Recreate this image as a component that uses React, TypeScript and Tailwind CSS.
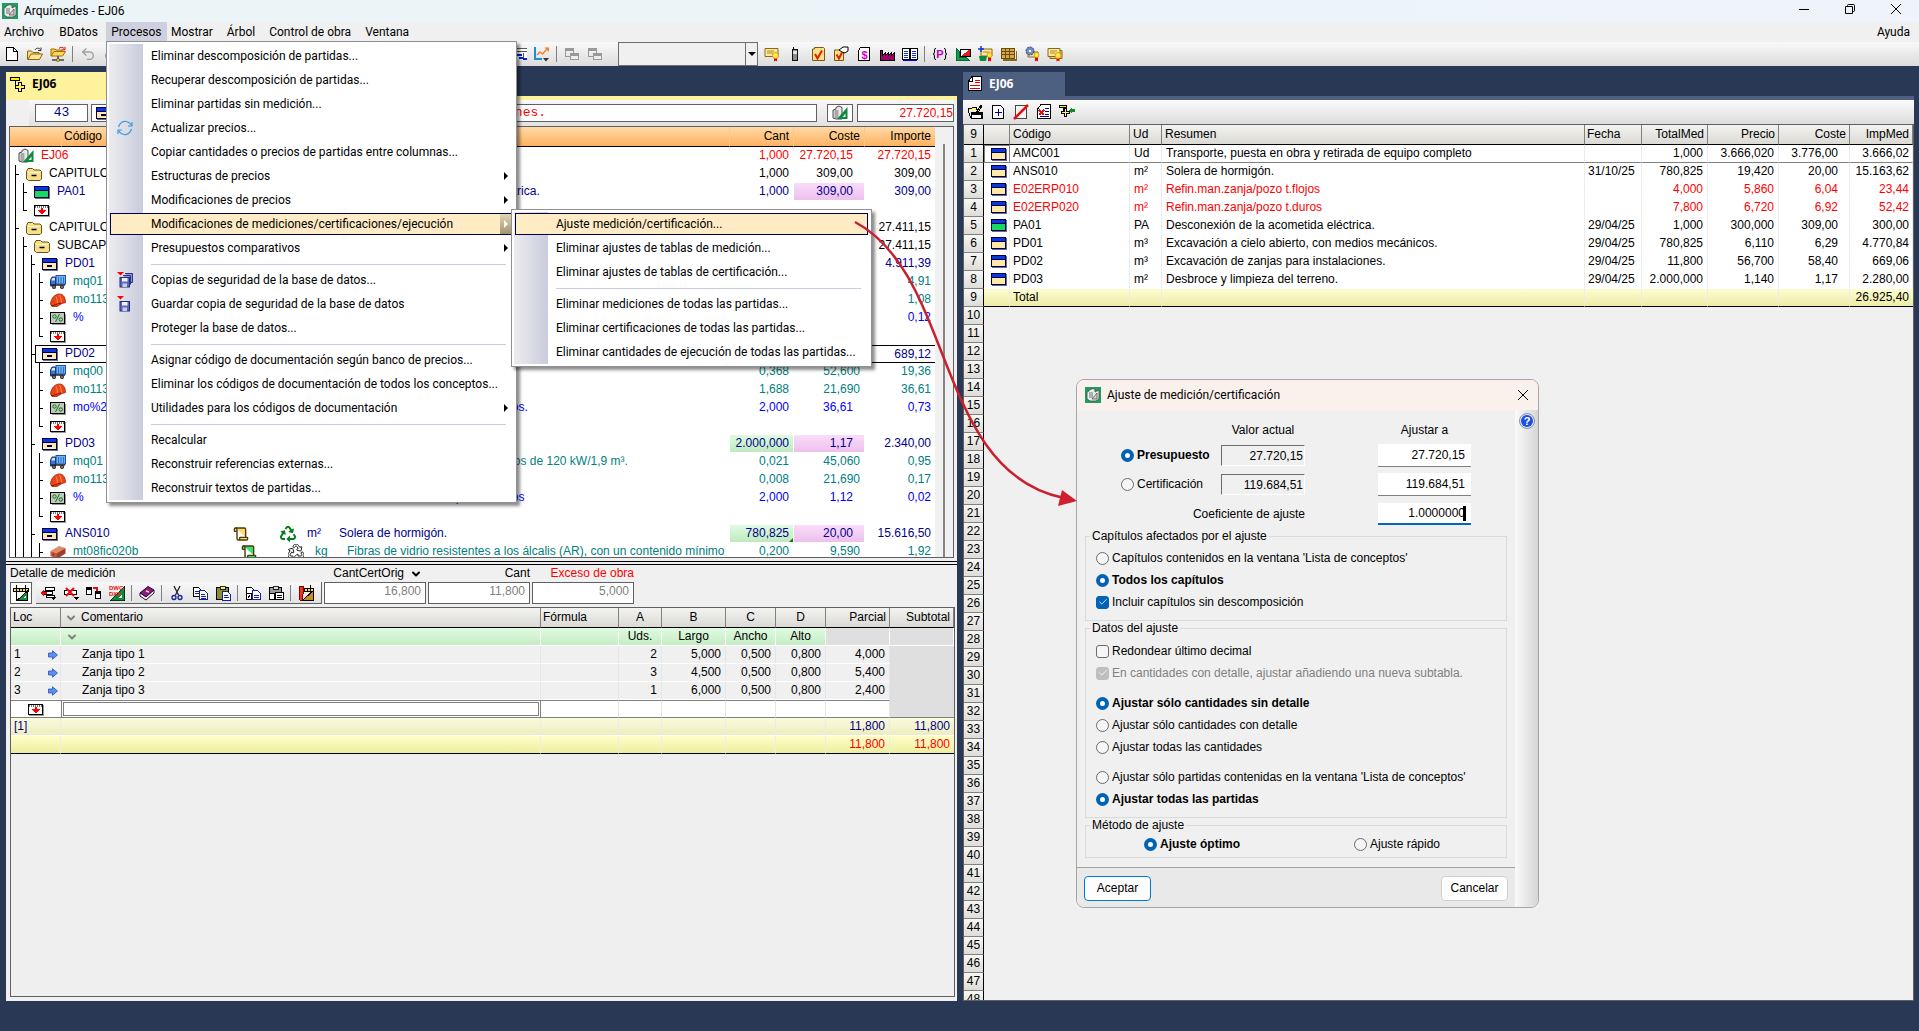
import type { ReactNode } from "react";
import { Check, ChevronDown, Scroll, Undo2, Redo2 } from "lucide-react";
import { FaRecycle } from "react-icons/fa";

/* ---------- Icons ---------- */

function Ico({ children, crisp = true }: { children: ReactNode; crisp?: boolean }) {
  return (
    <svg
      className="size-4 shrink-0"
      viewBox="0 0 16 16"
      fill="none"
      shapeRendering={crisp ? "crispEdges" : "auto"}
      aria-hidden="true"
    >
      {children}
    </svg>
  );
}

const AppIcon = () => (
  <Ico crisp={false}>
    <rect width="16" height="16" fill="#1f9d63" />
    <path d="M2 5l2-1V3l4-1.500l2 1V5l4-2v9l-3 2H5l-3-2z" fill="#e8ece9" stroke="#4a4f4c" strokeWidth=".8" />
    <path d="M4 6h4M4 8h4M4 10h4" stroke="#555" strokeWidth=".8" />
    <path d="M7 12l5-6v6z" fill="#cfd6d2" stroke="#444" strokeWidth=".7" />
  </Ico>
);

const ProjectIcon = () => (
  <Ico crisp={false}>
    <path d="M1 5l3-1V2.500L7 1l3 1.500V14H4l-3-1z" fill="#e9ebea" stroke="#333" strokeWidth=".9" />
    <path d="M2.500 6h4M2.500 8h4M2.500 10h4M2.500 12h4" stroke="#555" strokeWidth=".9" />
    <path d="M5 14L15.500 2v12z" fill="#0f8a3c" />
    <path d="M10.500 12l3-3.500V12z" fill="#e9f5ec" />
  </Ico>
);

const FolderIcon = () => (
  <Ico crisp={false}>
    <path d="M.5 5.500L2 2.500h4.500L8 4h6L15.500 5.500v7.500L14 14.500H2.500L.5 13z" fill="#f5df8d" stroke="#6b5312" />
    <path d="M2 6.500h12" stroke="#fff6c8" />
    <path d="M5.500 9.500h5" stroke="#000" strokeWidth="1.500" />
  </Ico>
);

function ItemIcon({ fill = "#ffe9a8", minus = false }: { fill?: string; minus?: boolean }) {
  return (
    <Ico>
      <path d="M1 14.500h14.500V3" stroke="#6a6a8a" />
      <rect x=".5" y="2.500" width="14" height="11" fill={fill} stroke="#00004a" />
      <rect x="1" y="3" width="13" height="3" fill="#0a38e0" />
      <path d="M1 6.500h13" stroke="#00004a" />
      {minus && <path d="M5 10h5" stroke="#00004a" strokeWidth="2" />}
    </Ico>
  );
}

const EndIcon = () => (
  <Ico>
    <path d="M1 14.500h14.500V4" stroke="#999" />
    <rect x=".5" y="3.500" width="14" height="10" fill="#fff" stroke="#000" />
    <path d="M1 5h13" stroke="#777" strokeWidth="2" strokeDasharray="1 1" />
    <path d="M7 6h2v2h3v1h-1v1h-1v1H9v1H7v-1H6v-1H5V9H4V8h3z" fill="#f00" />
  </Ico>
);

const TruckIcon = () => (
  <Ico crisp={false}>
    <rect x="6" y="1.500" width="9.500" height="8.500" fill="#6fb4f5" stroke="#1c4f9c" />
    <path d="M8.500 3v6M11 3v6M13.500 3v6" stroke="#2f6fc4" />
    <path d="M.5 6L2 3h3.500v9h-5z" fill="#2f78d8" stroke="#143d80" />
    <path d="M1.500 6L2.500 4H5v2.500H1.500z" fill="#e9e4d8" />
    <path d="M1 11h14" stroke="#223" strokeWidth="1.500" />
    <circle cx="4" cy="13" r="2" fill="#222" />
    <circle cx="12" cy="13" r="2" fill="#222" />
    <circle cx="4" cy="13" r=".8" fill="#ccc" />
    <circle cx="12" cy="13" r=".8" fill="#ccc" />
  </Ico>
);

const HelmetIcon = () => (
  <Ico crisp={false}>
    <path d="M.5 12C1 6 5 2 9.500 2c4 0 6 4 6 8.500l-3.500 1-5 3H2z" fill="#ec4417" stroke="#9c2305" strokeWidth=".8" />
    <path d="M6 4.500c1 2 1.500 4 1.300 7M9.500 3c1.200 2 1.800 4.500 1.800 7.500" stroke="#ff9a6b" strokeWidth=".9" />
    <path d="M1 13.500c3 .5 6-2 10-2.500" stroke="#7a1a02" />
  </Ico>
);

const PercentIcon = () => (
  <Ico>
    <path d="M15.500 4v10.500H2" stroke="#999" />
    <rect x=".5" y="2.500" width="14" height="11" fill="#c3c6c3" stroke="#000" />
    <g shapeRendering="auto" stroke="#067a06">
      <circle cx="4.500" cy="6.500" r="1.700" />
      <circle cx="10.800" cy="9.500" r="1.700" />
      <path d="M9.500 4l-4 8" />
    </g>
  </Ico>
);

const BrickIcon = () => (
  <Ico crisp={false}>
    <path d="M.5 7L9 2l6.500 2L7 9z" fill="#e08a6a" />
    <path d="M.5 7L7 9v6L.5 12z" fill="#c4553a" />
    <path d="M7 9l8.500-5v5.500L7 15z" fill="#a13d27" />
    <circle cx="3.500" cy="10.500" r=".8" fill="#6b2314" />
  </Ico>
);

const ArrowRightIcon = () => (
  <svg className="h-2.5 w-2.5 shrink-0" viewBox="0 0 10 10" aria-hidden="true">
    <path d="M.5 3h4V.8L9.500 5 4.500 9.200V7h-4z" fill="#5b8ff0" stroke="#2a50b0" strokeWidth=".8" />
  </svg>
);

const RefreshIcon = () => (
  <Ico crisp={false}>
    <path d="M1.500 7C2.500 3 6 1 9 1.500c2.500.3 4.300 1.800 5.500 4M14.500 9c-1 4-4.500 6-7.500 5.500C4.500 14.200 2.700 12.700 1.500 10.500" stroke="#3d9be0" strokeWidth="1.200" />
    <path d="M15 2v4h-4M1 14v-4h4" stroke="#3d9be0" strokeWidth="1.200" />
  </Ico>
);

function FloppyIcon({ stack = false }: { stack?: boolean }) {
  return (
    <Ico crisp={false}>
      {stack && <path d="M8 1.500h7.500v9h-2M6 3.500h7.500v9" fill="#8d97d8" stroke="#2d3684" />}
      <rect x="3" y="5.500" width="9.500" height="9.500" fill="#5a67c0" stroke="#242c74" />
      <rect x="5" y="6" width="5.500" height="3.500" fill="#eef0fb" />
      <rect x="5.500" y="11.500" width="4.500" height="3.500" fill="#c8cdea" />
      <path d="M0 0h7L3.500 3.500z" fill="#f00" />
    </Ico>
  );
}

const TreeTabIcon = () => (
  <Ico>
    <path d="M.5 1.500h9v3h-9z" fill="#fff000" stroke="#000" />
    <path d="M5 4.500v5" stroke="#000" />
    <path d="M8.500 6.500h3v3h3v3h-3v3h-3v-3h-3v-3h3z" fill="#fff36b" stroke="#000" />
  </Ico>
);

const ListTabIcon = () => (
  <Ico>
    <path d="M5 .5h9.500v14H1.500V5z" fill="#fff" stroke="#000" />
    <path d="M5.500 1v4H2" stroke="#000" />
    <path d="M8 4.500h5M8 6.500h5M3 9.500h10M3 12.500h10" stroke="#e00000" />
  </Ico>
);

const NewIcon = () => (
  <Ico>
    <path d="M2.500 1.500h7l4 4v9h-11z" fill="#fff" stroke="#000" />
    <path d="M9.500 1.500v4h4" stroke="#000" />
  </Ico>
);

const OpenIcon = () => (
  <Ico crisp={false}>
    <path d="M.5 13.500V5h4l1.500 1.500h6V8" fill="#f7dc7a" stroke="#8a6410" />
    <path d="M1 13.500L4 8h11.500l-3 5.500z" fill="#fbe796" stroke="#8a6410" />
    <path d="M8 4c1-2 4-2.500 5.500-.5M14 1.500V4.500h-3" stroke="#333" />
  </Ico>
);

const NetFolderIcon = () => (
  <Ico crisp={false}>
    <path d="M1 10V3h4l1 1h6v1.500" fill="#f7c94c" stroke="#a86a00" />
    <path d="M1 10l3-4.500h11.500l-3 4.500z" fill="#ffd95e" stroke="#a86a00" />
    <path d="M9 2.500c1-1.500 4-1.500 5 0M15 .8v3h-3" stroke="#e00000" />
    <path d="M8 10v3M2 14h12" stroke="#444" strokeWidth="1.500" />
    <circle cx="8" cy="14" r="1.600" fill="#f0c000" stroke="#444" strokeWidth=".6" />
  </Ico>
);

const GanttIcon = () => (
  <Ico>
    <rect x="3" y="2" width="13" height="12" fill="#fff" />
    <path d="M3 2.500h13M3 5.500h13M12.500 7v7" stroke="#555" />
    <path d="M6 8.500h5M8 11.500h4M12 13h4" stroke="#0a20e0" strokeWidth="2" />
  </Ico>
);

const ChartIcon = () => (
  <Ico crisp={false}>
    <path d="M1 1v12h7" stroke="#1a8fd8" strokeWidth="2" />
    <path d="M3 9l3-3 2.500 2L14 2" stroke="#f5822a" strokeWidth="1.500" />
    <path d="M10.500 1.500H15V6z" fill="#f5822a" />
    <path d="M9 12h6l-3 3.500z" fill="#333" />
  </Ico>
);

const CopyPaneIcon = () => (
  <Ico>
    <rect x="1.500" y="2.500" width="8" height="8" stroke="#999" />
    <path d="M2 4h7" stroke="#999" strokeWidth="2" />
    <rect x="6.500" y="7.500" width="8" height="6" fill="#eee" stroke="#999" />
    <path d="M7 9h7" stroke="#999" strokeWidth="2" />
  </Ico>
);

const CertIcon = () => (
  <Ico crisp={false}>
    <path d="M1 2.500h13v8H1z" fill="#fbe9a0" stroke="#8a6a14" />
    <path d="M3 5h7M3 7h6" stroke="#b08820" />
    <path d="M10 11v4.500l1.500-1 1.500 1V11" fill="#e00000" />
    <circle cx="11.500" cy="9.500" r="3" fill="#ffe84a" stroke="#d09000" strokeWidth=".8" />
  </Ico>
);

const CertStackIcon = () => (
  <Ico crisp={false}>
    <path d="M3 4.500h12v8H3z" fill="#e8c860" stroke="#8a6a14" />
    <path d="M1 2.500h12v8H1z" fill="#fbe9a0" stroke="#8a6a14" />
    <path d="M3 5h7M3 7h5" stroke="#b08820" />
    <path d="M9.500 11v4.500l1.500-1 1.500 1V11" fill="#e00000" />
    <circle cx="11" cy="9.500" r="3" fill="#ffe84a" stroke="#d09000" strokeWidth=".8" />
  </Ico>
);

const PhoneIcon = () => (
  <Ico>
    <path d="M6 1v3" stroke="#000" />
    <rect x="5.500" y="3.500" width="5" height="11" rx="1" fill="#8b8b8b" stroke="#111" />
    <rect x="6" y="5" width="4" height="3" fill="#e0e8e0" />
  </Ico>
);

const CheckPageIcon = () => (
  <Ico crisp={false}>
    <path d="M2.500 3h2V1.500h9l1 1v12h-12z" fill="#fbe08a" stroke="#7a5a10" />
    <path d="M5 8l2.500 4.500L12 4.500" stroke="#e02000" strokeWidth="2" />
  </Ico>
);

const CheckHandIcon = () => (
  <Ico crisp={false}>
    <path d="M1.500 4h9v10.500h-9z" fill="#fbe08a" stroke="#7a5a10" />
    <path d="M3.500 8.500L6 12.500 9 6.500" stroke="#e02000" strokeWidth="2" />
    <path d="M6 4l4-3h5v4l-3 2-3-1z" fill="#fff" stroke="#000" />
  </Ico>
);

const DollarPageIcon = () => (
  <Ico>
    <path d="M4.500 1.500h9v13h-11v-10z" fill="#fff" stroke="#000" />
    <text x="8.500" y="12.500" textAnchor="middle" fontSize="11" fontWeight="700" fontFamily="Liberation Sans" fill="#d000d0">
      $
    </text>
  </Ico>
);

const FactoryIcon = () => (
  <Ico>
    <path d="M1 4h2v6l3-3v3l3-3v3l3-3v3l3-3v7H1z" fill="#a0006a" stroke="#000" />
  </Ico>
);

const BookIcon = () => (
  <Ico>
    <path d="M.5 2.500h7v11h-7zM8.500 2.500h7v11h-7z" fill="#fff" stroke="#000" />
    <path d="M2 5h4M2 7h4M2 9h4M2 11h4M10 5h4M10 7h4M10 9h4M10 11h4" stroke="#1030d0" />
    <path d="M1 14.500h14" stroke="#00f" />
  </Ico>
);

const ParamIcon = () => (
  <Ico crisp={false}>
    <path d="M4 2.500c-2 0-1.500 1-1.500 2.500S2.500 8 1 8c1.500 0 1.500 1.500 1.500 3S2 13.500 4 13.500M12 2.500c2 0 1.500 1 1.500 2.500s0 3 1.500 3c-1.500 0-1.500 1.500-1.500 3s.5 2.500-1.500 2.500" stroke="#000" />
    <text x="8" y="12" textAnchor="middle" fontSize="11" fontWeight="700" fontFamily="Liberation Sans" fill="#c000c0">
      P
    </text>
  </Ico>
);

const ChartPaneIcon = () => (
  <Ico>
    <path d="M1 2v12h13l-3-3H4V5z" fill="#12a03a" stroke="#064" />
    <rect x="5.500" y="3.500" width="10" height="7" fill="#fff" stroke="#000" />
    <path d="M6 10l8-6h1v6z" fill="#e02020" />
  </Ico>
);

const GridCertIcon = () => (
  <Ico>
    <path d="M.5 2.500h13v10H.5z" fill="#d3a94a" stroke="#6d4c0a" />
    <path d="M1 5.500h12M1 8.500h12M4.500 3v9M8.500 3v9" stroke="#6d4c0a" />
    <path d="M2 14h13.500V5" stroke="#8a6a14" strokeWidth="2" />
  </Ico>
);

const GearCertIcon = () => (
  <Ico crisp={false}>
    <path d="M4 6h10v5H4z" fill="#fbe9a0" stroke="#8a6a14" />
    <circle cx="6" cy="5" r="4" fill="#6f86c8" stroke="#33488c" strokeDasharray="2 1" />
    <circle cx="6" cy="5" r="1.300" fill="#fff" />
    <path d="M11 11v4.500l1.500-1 1.500 1V11" fill="#e00000" />
    <circle cx="12.500" cy="9" r="2.500" fill="#ffe84a" stroke="#d09000" strokeWidth=".8" />
  </Ico>
);

const PlusCertIcon = () => (
  <Ico crisp={false}>
    <path d="M3 3h11v7H3z" fill="#fbe9a0" stroke="#8a6a14" />
    <path d="M5 6h6" stroke="#b08820" />
    <path d="M1 10h8l-1 5H2z" fill="#0f8a3c" />
    <path d="M3 0v6M0 3h6" stroke="#0a38e0" strokeWidth="1.500" />
    <path d="M10 11v4.500l1.500-1 1.500 1V11" fill="#e00000" />
    <circle cx="11.500" cy="9" r="2.500" fill="#ffe84a" stroke="#d09000" strokeWidth=".8" />
  </Ico>
);

/* small toolbar icons of the concept list */
const EditListIcon = () => (
  <Ico>
    <path d="M1.500 7V4.500h3l1-1h4v2" fill="#fff36b" stroke="#000" />
    <path d="M10 7l4-6 1 1-3 5z" fill="#fff36b" stroke="#000" />
    <rect x="4" y="8" width="12" height="7" fill="#000" />
    <rect x="5" y="11" width="9" height="3" fill="#fff" />
    <path d="M1 7l3 7" stroke="#000" />
  </Ico>
);
const AddPageIcon = () => (
  <Ico>
    <path d="M2.500 1.500h8l3 3v10h-11z" fill="#fff" stroke="#000" />
    <path d="M8 5v7M4.500 8.500h7" stroke="#000090" strokeWidth="1" />
  </Ico>
);
const SlashPageIcon = () => (
  <Ico>
    <rect x="2.500" y="1.500" width="11" height="13" fill="#f4f4f4" stroke="#444" />
    <path d="M1 15L15 1" stroke="#e01010" strokeWidth="2.500" shapeRendering="auto" />
  </Ico>
);
const DeleteListIcon = () => (
  <Ico>
    <path d="M5 .5h9.500v14H1.500V5z" fill="#fff" stroke="#000" />
    <path d="M9 4h4M9 7h4M9 10h4M4 12h9" stroke="#000090" />
    <path d="M3 6l5 5M8 6l-5 5" stroke="#e01010" strokeWidth="1.500" />
  </Ico>
);
const TreeAddIcon = () => (
  <Ico>
    <path d="M.5 1.500h7v2h-7z" fill="#fff000" stroke="#000" />
    <path d="M4 4v4" stroke="#000" />
    <path d="M5.500 4.500h2v3h3v2h-3v3h-2v-3h-3v-2h3z" fill="#fff36b" stroke="#000" />
    <path d="M10 6l3-3v2h3v3h-3v2z" fill="#108a20" />
  </Ico>
);

/* icons of the measurement toolbar */
const RulerIcon = () => (
  <Ico>
    <path d="M3.500 0v16M12.500 0v7" stroke="#000" />
    <path d="M0 5h16" stroke="#000" strokeWidth="4" />
    <path d="M1 5h14" stroke="#ffd84a" strokeWidth="2" strokeDasharray="2 1" />
    <path d="M4 15.500L14.500 6v9.500z" fill="#0f8a3c" stroke="#000" />
    <path d="M10 13l2.500-2.500V13z" fill="#fff" />
  </Ico>
);
const InsertRowIcon = () => (
  <Ico>
    <path d="M5.500 2.500h9v3h-9zM3.500 6.500h9v3h-9zM6.500 10.500h8v2h-8z" fill="#fff" stroke="#000" />
    <path d="M0 8l4-3v2h3v2H4v2z" fill="#e01010" />
    <path d="M11 12h5l-2.500 3z" fill="#000" />
  </Ico>
);
const DeleteRowIcon = () => (
  <Ico>
    <path d="M1 5.500h12v4H1z" stroke="#000" fill="#fff" />
    <path d="M3 3l8 8M11 3l-8 8" stroke="#e01010" strokeWidth="2" shapeRendering="auto" />
    <path d="M11 12h5l-2.500 3z" fill="#000" />
  </Ico>
);
const LinkTablesIcon = () => (
  <Ico>
    <rect x=".5" y="2.500" width="5" height="7" fill="#fff" stroke="#000" />
    <rect x="9.500" y="6.500" width="5" height="7" fill="#fff" stroke="#000" />
    <path d="M1 4h4M10 8h4" stroke="#000" strokeWidth="2" />
    <path d="M7 3h4v3" stroke="#e01010" strokeWidth="1.500" />
  </Ico>
);
const DwgIcon = () => (
  <Ico>
    <path d="M1 15.500L15.500 1v14.500z" fill="#0f8a3c" stroke="#000" strokeWidth=".6" />
    <path d="M10 13l3-4v4z" fill="#fff" />
    <text x="0" y="5" fontSize="6" fontWeight="700" fontFamily="Liberation Sans" fill="#e01010">
      DWG
    </text>
    <text x="0" y="11" fontSize="6" fontWeight="700" fontFamily="Liberation Sans" fill="#e01010">
      DXF
    </text>
  </Ico>
);
const PurpleBookIcon = () => (
  <Ico crisp={false}>
    <path d="M1 8l8-6.500 6 3.500-8 7z" fill="#8a1a8a" stroke="#2a002a" />
    <path d="M1 8v3l6 4 8-7V5l-8 7z" fill="#fff" stroke="#2a002a" />
    <path d="M7 6l3 1" stroke="#ffe84a" strokeWidth="1.500" />
  </Ico>
);
const ScissorsIcon = () => (
  <Ico crisp={false}>
    <path d="M5 1l4.500 9M11 1L6.500 10" stroke="#222" strokeWidth="1.300" />
    <circle cx="5" cy="12.500" r="2" stroke="#1020a0" strokeWidth="1.300" />
    <circle cx="11" cy="12.500" r="2" stroke="#1020a0" strokeWidth="1.300" />
  </Ico>
);
const CopyIcon = () => (
  <Ico>
    <path d="M1.500 2.500h5l3 3v6h-8z" fill="#fff" stroke="#000" />
    <path d="M3 6h4M3 8h4" stroke="#1020a0" />
    <path d="M7.500 5.500h5l3 3v6h-8z" fill="#fff" stroke="#1020a0" />
    <path d="M9 9h4M9 11h5M9 13h5" stroke="#1020a0" />
  </Ico>
);
const PasteIcon = () => (
  <Ico>
    <rect x="1.500" y="2.500" width="12" height="12" fill="#8c8c30" stroke="#000" />
    <rect x="5" y="1" width="5" height="3" fill="#ffe84a" stroke="#000" strokeWidth=".8" />
    <path d="M7.500 6.500h5l3 3v6h-8z" fill="#fff" stroke="#1020a0" />
    <path d="M9 10h4M9 12h5" stroke="#1020a0" />
  </Ico>
);
const CopyRefIcon = () => (
  <Ico>
    <path d="M1.500 2.500h5l3 3v6h-8z" fill="#fff" stroke="#000" />
    <path d="M7.500 5.500h5l3 3v6h-8z" fill="#fff" stroke="#1020a0" />
    <path d="M9 10h5M9 12h5" stroke="#1020a0" />
    <rect x="1.500" y="8.500" width="5" height="6" fill="#fff" stroke="#000" />
    <path d="M3 13l2-3" stroke="#000" />
  </Ico>
);
const PasteRefIcon = () => (
  <Ico>
    <rect x="1.500" y="2.500" width="12" height="12" fill="#9a9a9a" stroke="#000" />
    <rect x="5" y="1" width="5" height="3" fill="#ddd" stroke="#000" strokeWidth=".8" />
    <path d="M7.500 7.500h8v7h-8z" fill="#fff" stroke="#000" />
    <path d="M9 10h5M9 12h5" stroke="#000" />
    <rect x="1.500" y="8.500" width="5" height="6" fill="#fff" stroke="#000" />
  </Ico>
);
const BrushRulerIcon = () => (
  <Ico>
    <path d="M12.500 0v7" stroke="#000" />
    <path d="M3 5h13" stroke="#000" strokeWidth="4" />
    <path d="M4 5h11" stroke="#ffd84a" strokeWidth="2" strokeDasharray="2 1" />
    <path d="M4 15.500L15 6v9.500z" fill="#c98a2a" stroke="#000" />
    <path d="M1 1h4v8l-1 6H2L1 9z" fill="#e03a1a" stroke="#800" />
  </Ico>
);

/* ---------- Data ---------- */

type MenuEntry = { label: string; icon?: ReactNode; sub?: boolean; active?: boolean } | "sep";

const processMenu: MenuEntry[] = [
  { label: "Eliminar descomposición de partidas..." },
  { label: "Recuperar descomposición de partidas..." },
  { label: "Eliminar partidas sin medición..." },
  { label: "Actualizar precios...", icon: <RefreshIcon /> },
  { label: "Copiar cantidades o precios de partidas entre columnas..." },
  { label: "Estructuras de precios", sub: true },
  { label: "Modificaciones de precios", sub: true },
  { label: "Modificaciones de mediciones/certificaciones/ejecución", sub: true, active: true },
  { label: "Presupuestos comparativos", sub: true },
  "sep",
  { label: "Copias de seguridad de la base de datos...", icon: <FloppyIcon stack /> },
  { label: "Guardar copia de seguridad de la base de datos", icon: <FloppyIcon /> },
  { label: "Proteger la base de datos..." },
  "sep",
  { label: "Asignar código de documentación según banco de precios..." },
  { label: "Eliminar los códigos de documentación de todos los conceptos..." },
  { label: "Utilidades para los códigos de documentación", sub: true },
  "sep",
  { label: "Recalcular" },
  { label: "Reconstruir referencias externas..." },
  { label: "Reconstruir textos de partidas..." },
];

const adjustMenu: MenuEntry[] = [
  { label: "Ajuste medición/certificación...", active: true },
  { label: "Eliminar ajustes de tablas de medición..." },
  { label: "Eliminar ajustes de tablas de certificación..." },
  "sep",
  { label: "Eliminar mediciones de todas las partidas..." },
  { label: "Eliminar certificaciones de todas las partidas..." },
  { label: "Eliminar cantidades de ejecución de todas las partidas..." },
];

const NAVY = "text-[#00008b]";
const TEAL = "text-[#008080]";
const BLUE = "text-[#0000ff]";
const RED = "text-[#ff0000]";

type TreeRow = {
  depth: number;
  icon: ReactNode;
  code?: string;
  color?: string;
  unit?: string;
  text?: string;
  cant?: string;
  coste?: string;
  importe?: string;
  greenCant?: boolean;
  pinkCoste?: boolean;
  last?: boolean;
  selected?: boolean;
  detail?: boolean;
  scroll?: string;
  recycle?: string;
};

const treeRows: TreeRow[] = [
  { depth: 0, icon: <ProjectIcon />, code: "EJ06", color: RED, cant: "1,000", coste: "27.720,15", importe: "27.720,15" },
  { depth: 1, icon: <FolderIcon />, code: "CAPITULO", cant: "1,000", coste: "309,00", importe: "309,00" },
  { depth: 2, icon: <ItemIcon fill="#18d860" />, code: "PA01", color: NAVY, text: "Desconexión de la acometida eléctrica.", cant: "1,000", coste: "309,00", importe: "309,00", pinkCoste: true },
  { depth: 2, icon: <EndIcon />, last: true },
  { depth: 1, icon: <FolderIcon />, code: "CAPITULO", importe: "27.411,15" },
  { depth: 2, icon: <FolderIcon />, code: "SUBCAP", importe: "27.411,15" },
  { depth: 3, icon: <ItemIcon minus />, code: "PD01", color: NAVY, importe: "4.911,39" },
  { depth: 4, icon: <TruckIcon />, code: "mq01", color: TEAL, importe: "4,91" },
  { depth: 4, icon: <HelmetIcon />, code: "mo113", color: TEAL, importe: "1,08" },
  { depth: 4, icon: <PercentIcon />, code: "%", color: BLUE, importe: "0,12" },
  { depth: 4, icon: <EndIcon />, last: true },
  { depth: 3, icon: <ItemIcon minus />, code: "PD02", color: NAVY, importe: "689,12", selected: true },
  { depth: 4, icon: <TruckIcon />, code: "mq00", color: TEAL, cant: "0,368", coste: "52,600", importe: "19,36" },
  { depth: 4, icon: <HelmetIcon />, code: "mo113", color: TEAL, cant: "1,688", coste: "21,690", importe: "36,61" },
  { depth: 4, icon: <PercentIcon />, code: "mo%2", color: BLUE, text: "Costes directos complementarios.", cant: "2,000", coste: "36,61", importe: "0,73" },
  { depth: 4, icon: <EndIcon />, last: true },
  { depth: 3, icon: <ItemIcon minus />, code: "PD03", color: NAVY, cant: "2.000,000", coste: "1,17", importe: "2.340,00", greenCant: true, pinkCoste: true },
  { depth: 4, icon: <TruckIcon />, code: "mq01", color: TEAL, text: "Pala cargadora sobre neumáticos de 120 kW/1,9 m³.", cant: "0,021", coste: "45,060", importe: "0,95" },
  { depth: 4, icon: <HelmetIcon />, code: "mo113", color: TEAL, cant: "0,008", coste: "21,690", importe: "0,17" },
  { depth: 4, icon: <PercentIcon />, code: "%", color: BLUE, text: "Costes directos complementarios", cant: "2,000", coste: "1,12", importe: "0,02" },
  { depth: 4, icon: <EndIcon />, last: true },
  { depth: 3, icon: <ItemIcon minus />, code: "ANS010", color: NAVY, unit: "m²", text: "Solera de hormigón.", cant: "780,825", coste: "20,00", importe: "15.616,50", greenCant: true, pinkCoste: true, detail: true, scroll: "#ffd870", recycle: "text-[#007d1c]" },
  { depth: 4, icon: <BrickIcon />, code: "mt08fic020b", color: TEAL, unit: "kg", text: "Fibras de vidrio resistentes a los álcalis (AR), con un contenido mínimo", cant: "0,200", coste: "9,590", importe: "1,92", scroll: "#3fe070", recycle: "text-white [stroke:#000] [stroke-width:28px]" },
];

const conceptRows = [
  { code: "AMC001", ud: "Ud", text: "Transporte, puesta en obra y retirada de equipo completo", date: "", med: "1,000", price: "3.666,020", cost: "3.776,00", imp: "3.666,02" },
  { code: "ANS010", ud: "m²", text: "Solera de hormigón.", date: "31/10/25", med: "780,825", price: "19,420", cost: "20,00", imp: "15.163,62" },
  { code: "E02ERP010", ud: "m²", text: "Refin.man.zanja/pozo t.flojos", date: "", med: "4,000", price: "5,860", cost: "6,04", imp: "23,44", red: true },
  { code: "E02ERP020", ud: "m²", text: "Refin.man.zanja/pozo t.duros", date: "", med: "7,800", price: "6,720", cost: "6,92", imp: "52,42", red: true },
  { code: "PA01", ud: "PA", text: "Desconexión de la acometida eléctrica.", date: "29/04/25", med: "1,000", price: "300,000", cost: "309,00", imp: "300,00", green: true },
  { code: "PD01", ud: "m³", text: "Excavación a cielo abierto, con medios mecánicos.", date: "29/04/25", med: "780,825", price: "6,110", cost: "6,29", imp: "4.770,84" },
  { code: "PD02", ud: "m³", text: "Excavación de zanjas para instalaciones.", date: "29/04/25", med: "11,800", price: "56,700", cost: "58,40", imp: "669,06" },
  { code: "PD03", ud: "m²", text: "Desbroce y limpieza del terreno.", date: "29/04/25", med: "2.000,000", price: "1,140", cost: "1,17", imp: "2.280,00" },
];

const measureRows = [
  { loc: "1", text: "Zanja tipo 1", a: "2", b: "5,000", c: "0,500", d: "0,800", partial: "4,000" },
  { loc: "2", text: "Zanja tipo 2", a: "3", b: "4,500", c: "0,500", d: "0,800", partial: "5,400" },
  { loc: "3", text: "Zanja tipo 3", a: "1", b: "6,000", c: "0,500", d: "0,800", partial: "2,400" },
];

const emptyNumbers = Array.from({ length: 39 }, (_, i) => i + 10);

/* ---------- Menus ---------- */

function Menu({ entries, className, children }: { entries: MenuEntry[]; className: string; children?: ReactNode }) {
  return (
    <div className={`absolute border border-[#8f8f94] bg-white p-0.5 shadow-[3px_3px_3px_rgba(0,0,0,0.45)] ${className}`}>
      <ul className="bg-[linear-gradient(90deg,#ececef_0,#cacbdc_34px,#fff_34px)]">
        {entries.map((entry, i) =>
          entry === "sep" ? (
            <li key={i} className="flex h-2 items-center pr-2 pl-[42px]">
              <span className="h-px w-full bg-[#cbccdd]" />
            </li>
          ) : (
            <li key={i} className="relative h-6 px-px py-px">
              <button
                className={`flex h-[22px] w-full items-center text-left ${
                  entry.active ? "border border-[#000050] bg-[#ffebc4]" : "border border-transparent"
                }`}
              >
                <span className="flex w-10 shrink-0 pl-1.5">{entry.icon}</span>
                <span className="grow whitespace-nowrap">{entry.label}</span>
                {entry.sub && (
                  <span
                    className={`flex h-full w-3 items-center justify-center ${
                      entry.active ? "bg-linear-to-b from-[#e2d6b4] to-[#a3946c] text-white" : ""
                    }`}
                  >
                    <svg className="h-2 w-1" viewBox="0 0 4 8" aria-hidden="true">
                      <path d="M0 0l4 4-4 4z" fill="currentColor" />
                    </svg>
                  </span>
                )}
              </button>
              {entry.active && children}
            </li>
          ),
        )}
      </ul>
    </div>
  );
}

function MenuBar() {
  const item = "flex items-center px-[7px]";
  return (
    <nav className="flex h-5 bg-[#f0f0f0] pr-0.5">
      <button className="flex items-center pr-2 pl-1">Archivo</button>
      <button className="flex items-center pr-2 pl-[7px]">BDatos</button>
      <div className="relative z-20 flex">
        <button className="flex w-[61px] items-center justify-center bg-[#cfd0df]">Procesos</button>
        <Menu entries={processMenu} className="top-full left-0 -mt-px w-[411px]">
          <Menu entries={adjustMenu} className="-top-[3px] left-full -ml-[3px] w-[361px]" />
        </Menu>
      </div>
      <button className="flex items-center pr-[7px] pl-1">Mostrar</button>
      <button className={item}>Árbol</button>
      <button className={item}>Control de obra</button>
      <button className={item}>Ventana</button>
      <button className={`ml-auto ${item}`}>Ayuda</button>
    </nav>
  );
}

/* ---------- Toolbars ---------- */

function Tool({ label, children }: { label: string; children: ReactNode }) {
  return (
    <button aria-label={label} className="flex h-full w-[23px] shrink-0 items-center justify-center">
      {children}
    </button>
  );
}

const Divider = () => <span className="mx-[3px] h-4 w-px shrink-0 bg-[#808080]" />;

function MainToolbar() {
  return (
    <div className="flex h-6 items-center bg-linear-to-b from-[#f9f9f9] to-[#dcdcdc]">
      <div className="flex h-full w-[507px] items-center">
        <Tool label="Nuevo"><NewIcon /></Tool>
        <Tool label="Abrir"><OpenIcon /></Tool>
        <Tool label="Abrir en red"><NetFolderIcon /></Tool>
        <Divider />
        <Tool label="Deshacer"><Undo2 className="size-4 text-[#a0a0a0]" /></Tool>
        <Tool label="Rehacer"><Redo2 className="size-4 text-[#a0a0a0]" /></Tool>
      </div>
      <Tool label="Diagrama"><GanttIcon /></Tool>
      <Tool label="Gráfico"><ChartIcon /></Tool>
      <Divider />
      <Tool label="Copiar vista"><CopyPaneIcon /></Tool>
      <Tool label="Duplicar vista"><CopyPaneIcon /></Tool>
      <div className="mr-0.5 ml-3 flex h-6 w-[140px] items-stretch border border-[#6d6d6d] bg-[#f0f0f0]">
        <select aria-label="Vista" className="min-w-0 grow appearance-none bg-transparent">
          <option></option>
        </select>
        <span className="flex w-3 items-center justify-center border-l border-[#6d6d6d]">
          <svg className="h-1 w-2" viewBox="0 0 8 4" aria-hidden="true">
            <path d="M0 0h8L4 4z" fill="#000" />
          </svg>
        </span>
      </div>
      <Tool label="Certificado"><CertIcon /></Tool>
      <Tool label="Teléfono"><PhoneIcon /></Tool>
      <Tool label="Verificar"><CheckPageIcon /></Tool>
      <Tool label="Revisar"><CheckHandIcon /></Tool>
      <Tool label="Precios"><DollarPageIcon /></Tool>
      <Tool label="Fabricantes"><FactoryIcon /></Tool>
      <Tool label="Documentación"><BookIcon /></Tool>
      <Divider />
      <Tool label="Parámetros"><ParamIcon /></Tool>
      <Tool label="Gráfica"><ChartPaneIcon /></Tool>
      <Tool label="Añadir certificado"><PlusCertIcon /></Tool>
      <Tool label="Tablas"><GridCertIcon /></Tool>
      <Tool label="Configurar"><GearCertIcon /></Tool>
      <Tool label="Certificados"><CertStackIcon /></Tool>
    </div>
  );
}

/* ---------- Budget tree ---------- */

function Rails({ depth, last }: { depth: number; last?: boolean }) {
  return (
    <>
      {Array.from({ length: depth }, (_, i) =>
        i < depth - 1 ? (
          <span key={i} className="w-2 shrink-0 border-l border-black" />
        ) : (
          <span key={i} className="flex w-2 shrink-0 flex-col">
            <span className="h-2.5 w-1 border-b border-l border-black" />
            {!last && <span className="grow border-l border-black" />}
          </span>
        ),
      )}
    </>
  );
}

function TreeLine({ row }: { row: TreeRow }) {
  const edge = row.selected ? "border-y border-black leading-4" : "";
  const short = row.coste && row.coste.split(",")[1].length === 2;
  return (
    <tr className={`h-[18px] ${row.color ?? "text-black"}`}>
      <td colSpan={2} className="p-0">
        <div className="flex h-[18px] items-stretch overflow-hidden pl-[5px] whitespace-nowrap">
          <Rails depth={row.depth} last={row.last} />
          <div
            className={`flex min-w-0 grow items-center ${
              row.selected ? "-ml-1 border-y border-l border-black pl-1.5" : "pl-[3px]"
            }`}
          >
            {row.icon}
            <span className="w-[175px] shrink-0 pl-[7px]">{row.code}</span>
            <span className="w-[47px] shrink-0">
              {row.scroll && <Scroll className="size-4" fill={row.scroll} color="#4a3a08" strokeWidth={2} />}
            </span>
            <span className="w-[27px] shrink-0">
              {row.recycle && <FaRecycle className={`size-4 ${row.recycle}`} />}
            </span>
            <span className="w-8 shrink-0">{row.unit}</span>
            <span className="mr-1 min-w-0 grow overflow-hidden">{row.text}</span>
          </div>
        </div>
      </td>
      <td className={`p-0 ${edge}`}>
        <div
          className={`ml-px flex items-end justify-end ${row.detail ? "pr-0" : "pr-1"} ${
            row.greenCant ? "h-[17px] bg-linear-to-b from-[#dffbdf] to-[#c0e9c0]" : ""
          }`}
        >
          {row.cant}
          {row.detail && (
            <svg className="size-1" viewBox="0 0 4 4" aria-hidden="true">
              <path d="M4 0v4H0z" fill="#008000" />
            </svg>
          )}
        </div>
      </td>
      <td className={`p-0 ${edge}`}>
        <div
          className={`ml-px text-right ${short ? "pr-[11px]" : "pr-1"} ${
            row.pinkCoste ? "h-[17px] bg-linear-to-b from-[#fadcfa] to-[#ecc0ec]" : ""
          }`}
        >
          {row.coste}
        </div>
      </td>
      <td className={`py-0 pr-1 pl-0 text-right ${edge}`}>{row.importe}</td>
    </tr>
  );
}

function BudgetTree() {
  const th = "border-b border-black border-l border-l-[#ffc885] p-0 pr-1 text-right font-normal";
  return (
    <section className="flex min-h-0 grow-[462] basis-0 flex-col px-[3px]">
      <div className="flex h-[26px] items-center pl-5">
        <div className="flex h-full grow items-center bg-linear-to-b from-[#f8f8f8] to-[#e2e2e2] pl-1.5 font-['Liberation_Mono',monospace] text-[13px] leading-4">
          <input aria-label="Línea" defaultValue="43" className="h-[18px] w-[53px] border border-[#606060] bg-white text-center text-[#00008b]" />
          <span className="ml-[3px] flex h-[18px] w-[26px] items-center justify-center border border-[#606060] bg-white">
            <ItemIcon minus />
          </span>
          <input aria-label="Código" defaultValue="PD02" className="ml-1 h-[18px] w-[104px] border border-[#606060] bg-white px-1 text-[#ff0000]" />
          <input aria-label="Resumen" defaultValue="Excavación de zanjas para instalaciones." className="ml-1 h-[18px] min-w-0 grow border border-[#606060] bg-white px-1 text-[#ff0000]" />
          <button aria-label="Proyecto" className="ml-2.5 flex h-[18px] w-[26px] items-center justify-center border border-[#606060] bg-white">
            <ProjectIcon />
          </button>
          <input aria-label="Importe total" defaultValue="27.720,15" className="ml-1 h-[18px] w-[97px] border border-[#606060] bg-white text-right font-['Liberation_Sans',sans-serif] text-xs text-[#ff0000]" />
        </div>
      </div>
      <div className="mb-[3px] flex min-h-0 grow overflow-hidden border border-[#606060] bg-white">
        <div className="min-w-0 grow">
          <table className="w-full table-fixed border-separate border-spacing-0">
            <colgroup>
              <col className="w-[51px]" />
              <col />
              <col className="w-16" />
              <col className="w-[71px]" />
              <col className="w-[71px]" />
            </colgroup>
            <thead>
              <tr className="h-5 bg-linear-to-b from-[#ffd9a6] to-[#ffb05c]">
                <th className="border-b border-black p-0"></th>
                <th className="border-b border-l border-black border-l-[#ffc885] p-0 pl-0.5 text-left font-normal">Código</th>
                <th className={th}>Cant</th>
                <th className={th}>Coste</th>
                <th className={th}>Importe</th>
              </tr>
            </thead>
            <tbody>
              {treeRows.map((row, i) => (
                <TreeLine key={i} row={row} />
              ))}
            </tbody>
          </table>
        </div>
        <div className="flex w-[18px] shrink-0 justify-center bg-[#f0f0f0] pt-[17px]">
          <span className="w-0.5 bg-[#858585]" />
        </div>
      </div>
    </section>
  );
}

/* ---------- Measurement detail ---------- */

function DetailField({ id, label, value, red, menu }: { id: string; label: string; value: string; red?: boolean; menu?: boolean }) {
  return (
    <div className="flex w-[102px] flex-col">
      <label htmlFor={id} className={`flex h-[17px] items-center justify-end gap-1.5 whitespace-nowrap ${menu ? "pr-1" : ""} ${red ? RED : ""}`}>
        {label}
        {menu && <ChevronDown className="size-3" strokeWidth={4} />}
      </label>
      <input id={id} readOnly value={value} className="h-[22px] w-full border border-[#606060] bg-white pr-1 pb-1 text-right text-[#808080]" />
    </div>
  );
}

function MeasurementDetail() {
  const head = "border-b border-black border-r border-r-[#808080] p-0 font-normal";
  const cell = "border-b border-b-white border-r border-r-[#e6e6e6] p-0";
  const num = `${cell} pr-1 text-right`;
  const green = "border-b border-b-white border-r border-r-white p-0 font-normal";
  const sum = "border-r border-r-[#ececec] p-0";
  return (
    <section className="flex min-h-0 grow-[439] basis-0 flex-col border-t border-black">
      <div className="mt-0.5 border-t border-black" />
      <div className="flex gap-0.5 px-1">
        <div className="flex w-[312px] flex-col">
          <h2 className="flex h-[17px] items-center">Detalle de medición</h2>
          <div className="flex h-[22px] items-center">
            <button aria-label="Medición" className="mr-1 flex size-[22px] items-center justify-center border border-[#606060] bg-white">
              <RulerIcon />
            </button>
            <div className="flex h-full grow items-center border-r border-b border-[#606060] bg-linear-to-b from-[#f8f8f8] to-[#e2e2e2]">
              <Tool label="Insertar línea"><InsertRowIcon /></Tool>
              <Tool label="Borrar línea"><DeleteRowIcon /></Tool>
              <Tool label="Vincular tablas"><LinkTablesIcon /></Tool>
              <Tool label="Importar DWG"><DwgIcon /></Tool>
              <Divider />
              <Tool label="Manual"><PurpleBookIcon /></Tool>
              <Divider />
              <Tool label="Cortar"><ScissorsIcon /></Tool>
              <Tool label="Copiar"><CopyIcon /></Tool>
              <Tool label="Pegar"><PasteIcon /></Tool>
              <Divider />
              <Tool label="Copiar referencia"><CopyRefIcon /></Tool>
              <Tool label="Pegar referencia"><PasteRefIcon /></Tool>
              <Divider />
              <Tool label="Formato"><BrushRulerIcon /></Tool>
            </div>
          </div>
        </div>
        <DetailField id="cert" label="CantCertOrig" value="16,800" menu />
        <DetailField id="cant" label="Cant" value="11,800" />
        <DetailField id="exceso" label="Exceso de obra" value="5,000" red />
      </div>
      <div className="mr-0.5 mt-[3px] mb-1 ml-1 grow overflow-hidden border border-[#606060] bg-[#efefef]">
        <table className="w-full table-fixed border-separate border-spacing-0">
          <colgroup>
            <col className="w-[50px]" />
            <col />
            <col className="w-[78px]" />
            <col className="w-[43px]" />
            <col className="w-16" />
            <col className="w-[50px]" />
            <col className="w-[50px]" />
            <col className="w-16" />
            <col className="w-16" />
          </colgroup>
          <thead>
            <tr className="h-5 bg-linear-to-b from-[#f3f3f1] to-[#d9d8d3]">
              <th className={`${head} pl-0.5 text-left`}>Loc</th>
              <th className={`${head} text-left`}>
                <span className="flex items-center gap-1 pl-1">
                  <ChevronDown className="size-3 text-[#808080]" strokeWidth={4} />
                  Comentario
                </span>
              </th>
              <th className={`${head} pl-0.5 text-left`}>Fórmula</th>
              <th className={head}>A</th>
              <th className={head}>B</th>
              <th className={head}>C</th>
              <th className={head}>D</th>
              <th className={`${head} pr-[3px] text-right`}>Parcial</th>
              <th className={`${head} pr-[3px] text-right`}>Subtotal</th>
            </tr>
            <tr className="h-[18px] bg-linear-to-b from-[#e0fbe0] to-[#c3ecc3]">
              <td className={green}></td>
              <td className={`${green} pl-[5px]`}>
                <ChevronDown className="size-3 text-[#808080]" strokeWidth={4} />
              </td>
              <td className={green}></td>
              <th className={green}>Uds.</th>
              <th className={green}>Largo</th>
              <th className={green}>Ancho</th>
              <th className={green}>Alto</th>
              <td className={`${green} bg-[#dfdfdf]`}></td>
              <td className={`${green} bg-[#dfdfdf]`}></td>
            </tr>
          </thead>
          <tbody>
            {measureRows.map((r) => (
              <tr key={r.loc} className="h-[18px] bg-[#f0f0f0]">
                <td className={cell}>
                  <span className="flex items-center justify-between pr-0.5 pl-[3px]">
                    {r.loc}
                    <ArrowRightIcon />
                  </span>
                </td>
                <td className={`${cell} pl-[21px]`}>{r.text}</td>
                <td className={cell}></td>
                <td className={num}>{r.a}</td>
                <td className={num}>{r.b}</td>
                <td className={num}>{r.c}</td>
                <td className={num}>{r.d}</td>
                <td className={num}>{r.partial}</td>
                <td className="bg-[#dfdfdf] p-0"></td>
              </tr>
            ))}
            <tr className="h-[18px] bg-white">
              <td className="border-y border-[#808080] p-0">
                <span className="flex justify-center"><EndIcon /></span>
              </td>
              <td className="border border-[#808080] p-px">
                <input aria-label="Comentario" className="block h-3.5 w-full border border-[#808080] bg-white" />
              </td>
              {["f", "a", "b", "c", "d", "p"].map((k) => (
                <td key={k} className="border-y border-r border-y-[#808080] border-r-[#e6e6e6] p-0"></td>
              ))}
              <td className="border-b border-[#808080] bg-[#dfdfdf] p-0"></td>
            </tr>
            <tr className="h-[18px] bg-linear-to-b from-[#fbfbdf] to-[#ececbc] text-[#00008b]">
              <td className={`${sum} border-b border-b-white pl-[3px]`}>[1]</td>
              {["t", "f", "a", "b", "c", "d"].map((k) => (
                <td key={k} className={`${sum} border-b border-b-white`}></td>
              ))}
              <td className={`${sum} border-b border-b-white pr-1 text-right`}>11,800</td>
              <td className="border-b border-b-white p-0 pr-1 text-right">11,800</td>
            </tr>
            <tr className="h-[18px] bg-linear-to-b from-[#fefec8] to-[#ecec9f] text-[#ff0000]">
              {["l", "t", "f", "a", "b", "c", "d"].map((k) => (
                <td key={k} className={`${sum} border-b border-b-black`}></td>
              ))}
              <td className={`${sum} border-b border-b-black pr-1 text-right`}>11,800</td>
              <td className="border-b border-b-black p-0 pr-1 text-right">11,800</td>
            </tr>
          </tbody>
        </table>
      </div>
    </section>
  );
}

function BudgetPanel() {
  return (
    <div className="flex min-h-0 min-w-0 flex-col">
      <div className="flex h-6">
        <div className="flex w-40 items-center gap-1.5 bg-[#fff29d] pl-1 font-['Open_Sans',sans-serif] text-xs font-bold">
          <TreeTabIcon />
          EJ06
        </div>
      </div>
      <div className="h-1 bg-[#fff29d]" />
      <div className="flex min-h-0 grow flex-col bg-[#f0f0f0]">
        <BudgetTree />
        <MeasurementDetail />
      </div>
    </div>
  );
}

/* ---------- Concept list ---------- */

function ConceptPanel() {
  const head = "border-b border-black border-r border-r-[#808080] p-0 font-normal";
  const numHead = `${head} pr-[3px] text-right`;
  const rowNum =
    "border-b border-r border-b-[#808080] border-r-black bg-linear-to-b from-[#f7f7f5] to-[#dddcd7] p-0 text-center font-normal";
  return (
    <div className="flex min-h-0 min-w-0 flex-col">
      <div className="flex h-6">
        <div className="flex w-[102px] items-center gap-1.5 bg-[#4d6082] pl-1 font-['Open_Sans',sans-serif] text-xs font-bold text-white">
          <ListTabIcon />
          EJ06
        </div>
      </div>
      <div className="h-1 bg-[#4d6082]" />
      <div className="flex h-6 items-center bg-linear-to-b from-[#fbfbfb] to-[#dcdcdc]">
        <Tool label="Editar"><EditListIcon /></Tool>
        <Tool label="Añadir"><AddPageIcon /></Tool>
        <Tool label="Quitar"><SlashPageIcon /></Tool>
        <Tool label="Borrar lista"><DeleteListIcon /></Tool>
        <Tool label="Insertar en árbol"><TreeAddIcon /></Tool>
      </div>
      <div className="min-h-0 grow overflow-hidden border border-[#606060] bg-[#f0f0f0]">
        <table className="w-full table-fixed border-separate border-spacing-0">
          <colgroup>
            <col className="w-5" />
            <col className="w-[26px]" />
            <col className="w-[120px]" />
            <col className="w-8" />
            <col />
            <col className="w-[57px]" />
            <col className="w-[66px]" />
            <col className="w-[71px]" />
            <col className="w-[71px]" />
            <col className="w-[63px]" />
          </colgroup>
          <thead>
            <tr className="h-5 bg-linear-to-b from-[#f3f3f1] to-[#d9d8d3]">
              <th className="border-r border-b border-black p-0 font-normal">9</th>
              <th className={head}></th>
              <th className={`${head} pl-[3px] text-left`}>Código</th>
              <th className={`${head} pl-[3px] text-left`}>Ud</th>
              <th className={`${head} pl-[3px] text-left`}>Resumen</th>
              <th className={`${head} pl-0.5 text-left`}>Fecha</th>
              <th className={numHead}>TotalMed</th>
              <th className={numHead}>Precio</th>
              <th className={numHead}>Coste</th>
              <th className={numHead}>ImpMed</th>
            </tr>
          </thead>
          <tbody>
            {conceptRows.map((r, i) => {
              const td = `border-r border-b border-r-[#ececec] p-0 ${i === 0 ? "border-b-[#808080]" : "border-b-white"}`;
              return (
                <tr key={r.code} className={`h-[18px] bg-white ${r.red ? RED : ""}`}>
                  <th scope="row" className={`${rowNum} text-black`}>{i + 1}</th>
                  <td className={i === 0 ? "border border-[#808080] p-0" : td}>
                    <span className="flex justify-center pl-1">
                      <ItemIcon fill={r.green ? "#18d860" : undefined} />
                    </span>
                  </td>
                  <td className={`${td} pl-[3px]`}>{r.code}</td>
                  <td className={`${td} pl-1`}>{r.ud}</td>
                  <td className={`${td} truncate pl-1`}>{r.text}</td>
                  <td className={`${td} pl-[3px] whitespace-nowrap`}>{r.date}</td>
                  <td className={`${td} pr-1 text-right`}>{r.med}</td>
                  <td className={`${td} pr-1 text-right`}>{r.price}</td>
                  <td className={`${td} pr-[11px] text-right`}>{r.cost}</td>
                  <td className={`${td} pr-[3px] text-right`}>{r.imp}</td>
                </tr>
              );
            })}
            <tr className="h-[18px] bg-linear-to-b from-[#fdfdd0] to-[#ebeba4]">
              <th scope="row" className={rowNum}>9</th>
              <td className="border-r border-b border-r-[#ececec] border-b-black p-0"></td>
              <td className="border-r border-b border-r-[#ececec] border-b-black p-0 pl-[3px]">Total</td>
              {["u", "r", "f", "t", "p", "c"].map((k) => (
                <td key={k} className="border-r border-b border-r-[#ececec] border-b-black p-0"></td>
              ))}
              <td className="border-b border-black p-0 pr-1 text-right">26.925,40</td>
            </tr>
            {emptyNumbers.map((n) => (
              <tr key={n} className="h-[18px]">
                <th scope="row" className={rowNum}>{n}</th>
              </tr>
            ))}
          </tbody>
        </table>
      </div>
    </div>
  );
}

/* ---------- Dialog ---------- */

function Radio({ name, label, checked }: { name: string; label: string; checked?: boolean }) {
  return (
    <label className={`flex h-[22px] items-center gap-[3px] whitespace-nowrap ${checked ? "font-bold" : ""}`}>
      <input
        type="radio"
        name={name}
        defaultChecked={checked}
        className="size-[13px] shrink-0 appearance-none rounded-full border border-[#6b6b6b] bg-[#f6f6f6] checked:border-4 checked:border-[#0063b8] checked:bg-white"
      />
      {label}
    </label>
  );
}

function Checkbox({ label, checked, disabled }: { label: string; checked?: boolean; disabled?: boolean }) {
  return (
    <label className={`flex h-[22px] items-center gap-[3px] whitespace-nowrap ${disabled ? "text-[#808080]" : ""}`}>
      <span className="grid size-[13px] shrink-0 place-items-center *:[grid-area:1/1]">
        <input
          type="checkbox"
          defaultChecked={checked}
          disabled={disabled}
          className="size-[13px] appearance-none rounded-[3px] border border-[#6b6b6b] bg-[#f6f6f6] checked:border-[#0063b8] checked:bg-[#0063b8] disabled:border-[#bfbfbf] disabled:bg-[#bfbfbf]"
        />
        {checked && <Check className="pointer-events-none size-2.5 text-white" strokeWidth={2} />}
      </span>
      {label}
    </label>
  );
}

function AdjustDialog() {
  const legend = "-ml-1.5 h-[15px] px-0.5 leading-[15px]";
  const fieldset = "border border-[#dadada] px-2.5";
  const current = "h-[21px] w-full border border-[#fff] border-t-[#6d6d6d] border-l-[#6d6d6d] bg-[#f0f0f0] pr-px text-right";
  const target = "h-[23px] w-full border-b border-[#808080] bg-white pr-[6px] text-right";
  return (
    <div
      role="dialog"
      aria-label="Ajuste de medición/certificación"
      className="absolute top-[379px] left-[1076px] z-10 flex w-[463px] flex-col overflow-hidden rounded-lg border border-[#a6a6a6] bg-[#f0f0f0]"
    >
      <header className="flex h-[30px] items-center bg-[#faf1ed] pr-2.5 pl-2 font-['Roboto',sans-serif]">
        <AppIcon />
        <h2 className="grow pl-1.5">Ajuste de medición/certificación</h2>
        <button aria-label="Cerrar">
          <svg className="size-2.5" viewBox="0 0 10 10" stroke="#000" aria-hidden="true">
            <path d="M0 0l10 10M10 0L0 10" />
          </svg>
        </button>
      </header>
      <div className="flex">
        <div className="flex grow flex-col">
          <form className="px-2 pb-[9px]">
            <div className="grid grid-cols-[100px_84px_73px_93px] items-center pt-2.5 pl-9">
              <span className="col-start-2 flex h-[21px] items-center justify-center">Valor actual</span>
              <span className="col-start-4 text-center">Ajustar a</span>
              <div className="flex h-[29px] items-center"><Radio name="value" label="Presupuesto" checked /></div>
              <input aria-label="Presupuesto actual" readOnly value="27.720,15" className={current} />
              <input aria-label="Presupuesto ajustado" defaultValue="27.720,15" className={`col-start-4 ${target}`} />
              <div className="flex h-[29px] items-center"><Radio name="value" label="Certificación" /></div>
              <input aria-label="Certificación actual" readOnly value="119.684,51" className={current} />
              <input aria-label="Certificación ajustada" defaultValue="119.684,51" className={`col-start-4 ${target}`} />
              <label htmlFor="coef" className="col-span-2 flex h-[30px] items-center justify-end">
                Coeficiente de ajuste
              </label>
              <div className="col-start-4 flex h-[22px] items-center border-b-2 border-[#0067c0] bg-white pr-[5px]">
                <input id="coef" defaultValue="1.0000000" className="w-full min-w-0 bg-transparent text-right" />
                <span className="-ml-0.5 h-[15px] w-[3px] shrink-0 bg-black" />
              </div>
            </div>
            <fieldset className={`${fieldset} pt-[3px] pb-[7px]`}>
              <legend className={legend}>Capítulos afectados por el ajuste</legend>
              <Radio name="chapters" label="Capítulos contenidos en la ventana 'Lista de conceptos'" />
              <Radio name="chapters" label="Todos los capítulos" checked />
              <Checkbox label="Incluir capítulos sin descomposición" checked />
            </fieldset>
            <fieldset className={`${fieldset} pt-1 pb-[7px]`}>
              <legend className={legend}>Datos del ajuste</legend>
              <Checkbox label="Redondear último decimal" />
              <Checkbox label="En cantidades con detalle, ajustar añadiendo una nueva subtabla." checked disabled />
              <div className="py-2">
                <Radio name="quantities" label="Ajustar sólo cantidades sin detalle" checked />
                <Radio name="quantities" label="Ajustar sólo cantidades con detalle" />
                <Radio name="quantities" label="Ajustar todas las cantidades" />
              </div>
              <Radio name="items" label="Ajustar sólo partidas contenidas en la ventana 'Lista de conceptos'" />
              <Radio name="items" label="Ajustar todas las partidas" checked />
            </fieldset>
            <fieldset className={`${fieldset} pb-0.5`}>
              <legend className={legend}>Método de ajuste</legend>
              <div className="grid grid-cols-2 pl-12">
                <Radio name="method" label="Ajuste óptimo" checked />
                <div className="pl-[34px]"><Radio name="method" label="Ajuste rápido" /></div>
              </div>
            </fieldset>
          </form>
          <footer className="flex justify-between border-t border-[#a0a0a0] bg-[#e9e9e9] px-[7px] pt-2 pb-1.5">
            <button className="h-[25px] w-[67px] rounded-sm border border-[#0078d4] bg-[#fdfdfd]">Aceptar</button>
            <button className="h-[25px] w-[67px] rounded-sm border border-[#cfcfcf] bg-[#fdfdfd]">Cancelar</button>
          </footer>
        </div>
        <aside className="flex w-[23px] shrink-0 justify-center bg-linear-to-r from-[#fafafa] to-[#d6d6d6] pt-[3px]">
          <button aria-label="Ayuda" className="size-4">
            <svg viewBox="0 0 16 16" aria-hidden="true">
              <circle cx="8" cy="8" r="7.500" fill="#dfe5f2" stroke="#8a93a8" />
              <circle cx="8" cy="8" r="6" fill="#1f4fe0" />
              <text x="8" y="11.800" textAnchor="middle" fontSize="11" fontWeight="700" fontFamily="Liberation Sans" fill="#fff">
                ?
              </text>
            </svg>
          </button>
        </aside>
      </div>
    </div>
  );
}

/* ---------- App ---------- */

export default function App() {
  return (
    <div className="relative flex h-screen flex-col overflow-hidden bg-[#293955] font-['Liberation_Sans',Arial,sans-serif] text-xs leading-[17px] text-black">
      <div className="font-['Roboto','Noto_Sans',sans-serif]">
        <header className="flex h-[22px] items-center bg-linear-to-r from-[#ebf4f7] to-[#eef4fa] pl-0.5">
          <AppIcon />
          <h1 className="grow pl-1.5">Arquímedes - EJ06</h1>
          <div className="flex h-full pb-1">
            {[
              { label: "Minimizar", d: "M0 5.500h10" },
              { label: "Restaurar", d: "M.5 2.500h7v7h-7zM2.500 2V1.500a1 1 0 0 1 1-1h5a1 1 0 0 1 1 1v5a1 1 0 0 1-1 1H8" },
              { label: "Cerrar", d: "M0 0l10 10M10 0L0 10" },
            ].map((b) => (
              <button key={b.label} aria-label={b.label} className="flex w-[46px] items-center justify-center">
                <svg className="size-2.5" viewBox="0 0 10 10" fill="none" stroke="#000" aria-hidden="true">
                  <path d={b.d} />
                </svg>
              </button>
            ))}
          </div>
        </header>
        <MenuBar />
        <MainToolbar />
      </div>

      <main className="grid min-h-0 grow grid-cols-2 grid-rows-1 gap-1.5 pt-1.5 pr-[5px] pb-[30px] pl-1.5">
        <BudgetPanel />
        <ConceptPanel />
      </main>

      <AdjustDialog />

      <svg className="pointer-events-none absolute top-[215px] left-[850px] z-30 h-[300px] w-[230px]" viewBox="850 215 230 300" aria-hidden="true">
        <path d="M855 222C955 275 935 472 1064 498" fill="none" stroke="#c8202f" strokeWidth="2.500" />
        <path d="M1077 501l-15-11-4 16z" fill="#d0202f" />
      </svg>
    </div>
  );
}
